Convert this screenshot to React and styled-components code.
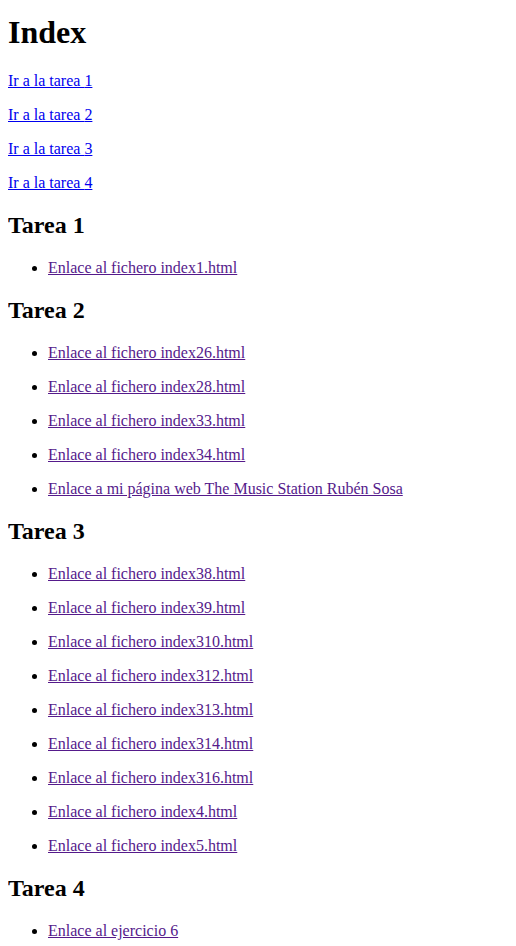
import styled, { createGlobalStyle } from 'styled-components'

const GlobalStyle = createGlobalStyle`
    body {
        margin: 0 8px 8px;
        font-family: 'Liberation Serif', 'Times New Roman', serif;
        font-size: 16px;
        color: black;
        background: white;
    }
`

const tareas = [
    { title: 'Tarea 1', links: ['Enlace al fichero index1.html'] },
    {
        title: 'Tarea 2',
        links: [
            'Enlace al fichero index26.html',
            'Enlace al fichero index28.html',
            'Enlace al fichero index33.html',
            'Enlace al fichero index34.html',
            'Enlace a mi página web The Music Station Rubén Sosa',
        ],
    },
    {
        title: 'Tarea 3',
        links: [
            'Enlace al fichero index38.html',
            'Enlace al fichero index39.html',
            'Enlace al fichero index310.html',
            'Enlace al fichero index312.html',
            'Enlace al fichero index313.html',
            'Enlace al fichero index314.html',
            'Enlace al fichero index316.html',
            'Enlace al fichero index4.html',
            'Enlace al fichero index5.html',
        ],
    },
    { title: 'Tarea 4', links: ['Enlace al ejercicio 6'] },
]

function App() {
    return (
        <Page>
            <GlobalStyle />
            <Title>Index</Title>
            {[1, 2, 3, 4].map((n) => (
                <Para key={n}>
                    <Link href={`#tarea${n}`}>Ir a la tarea {n}</Link>
                </Para>
            ))}
            {tareas.map((t) => (
                <section key={t.title}>
                    <Heading>{t.title}</Heading>
                    <List>
                        {t.links.map((l) => (
                            <Item key={l}>
                                <Link href="#" $visited>
                                    {l}
                                </Link>
                            </Item>
                        ))}
                    </List>
                </section>
            ))}
        </Page>
    )
}

export default App

const Page = styled.div`
    display: block;
`

const Title = styled.h1`
    font-size: 32px;
    font-weight: bold;
    margin: 14px 0 21.44px;
`

const Heading = styled.h2`
    font-size: 24px;
    font-weight: bold;
    margin: 19.92px 0;
`

const Para = styled.p`
    margin: 16px 0;
`

const List = styled.ul`
    margin: 16px 0;
    padding-left: 40px;
    list-style: disc;
`

const Item = styled.li`
    margin: 16px 0;
`

const Link = styled.a`
    color: ${({ $visited }) => ($visited ? '#551a8b' : '#0000ee')};
    text-decoration: underline;
`
